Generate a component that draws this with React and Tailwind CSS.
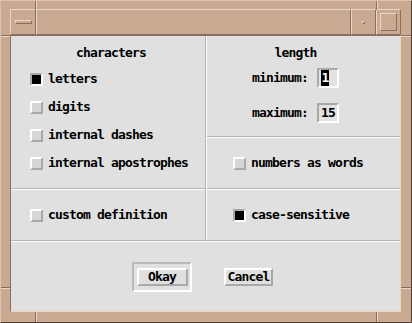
import React from "react";

const mono = "font-['DejaVu_Sans_Mono',monospace] font-bold text-[13px] tracking-[-0.83px] leading-[16px] text-black";
const raised = "border border-t-[#ead6c6] border-l-[#ead6c6] border-b-[#8a6d5a] border-r-[#8a6d5a]";

const Check = ({ on }) => (
  on
    ? <span className="block shrink-0 w-[13px] h-[13px] border-2 border-t-[#a9a9a9] border-l-[#a9a9a9] border-b-white border-r-white bg-black" />
    : <span className="block shrink-0 w-[13px] h-[13px] border-2 border-t-white border-l-white border-b-[#a9a9a9] border-r-[#a9a9a9] bg-[#d6d6d6]" />
);

const CheckRow = ({ on, label, className = "" }) => (
  <div className={`flex items-center gap-[5px] ${className}`}>
    <Check on={on} />
    <span className={mono}>{label}</span>
  </div>
);

const Field = ({ label, children }) => (
  <div className="flex items-center h-[20px]">
    <span className={`${mono} w-[65px]`}>{label}</span>
    <div className="w-[22px] h-[20px] border-2 border-t-[#a9a9a9] border-l-[#a9a9a9] border-b-white border-r-white bg-[#e2e2e2] flex items-center pl-[2px]">
      {children}
    </div>
  </div>
);

export default function App() {
  return (
    <div className="relative w-[412px] h-[323px] bg-[#c9a992] border border-t-[#dcc3b0] border-l-[#dcc3b0] border-b-[#4e3e34] border-r-[#4e3e34] pt-[8px] pl-[9px] pr-[10px] pb-[10px] flex flex-col">
      {/* resize notches */}
      <div className="absolute left-[34px] top-0 w-[2px] h-[9px] border-l border-l-[#8a6d5a] border-r border-r-[#ead6c6]" />
      <div className="absolute left-[375px] top-0 w-[2px] h-[9px] border-l border-l-[#8a6d5a] border-r border-r-[#ead6c6]" />
      <div className="absolute left-[34px] bottom-0 w-[2px] h-[10px] border-l border-l-[#8a6d5a] border-r border-r-[#ead6c6]" />
      <div className="absolute left-[375px] bottom-0 w-[2px] h-[10px] border-l border-l-[#8a6d5a] border-r border-r-[#ead6c6]" />
      <div className="absolute left-0 top-[34px] w-[9px] h-[2px] border-t border-t-[#8a6d5a] border-b border-b-[#ead6c6]" />
      <div className="absolute right-0 top-[34px] w-[10px] h-[2px] border-t border-t-[#8a6d5a] border-b border-b-[#ead6c6]" />
      <div className="absolute left-0 top-[286px] w-[9px] h-[2px] border-t border-t-[#8a6d5a] border-b border-b-[#ead6c6]" />
      <div className="absolute right-0 top-[286px] w-[10px] h-[2px] border-t border-t-[#8a6d5a] border-b border-b-[#ead6c6]" />

      {/* title bar */}
      <div className="flex h-[26px] shrink-0">
        <div className={`w-[26px] ${raised} flex items-center justify-center`}>
          <span className={`block w-[17px] h-[4px] ${raised}`} />
        </div>
        <div className={`flex-1 ${raised}`} />
        <div className={`w-[25px] ${raised} flex items-center justify-center`}>
          <span className={`block w-[3px] h-[3px] ${raised}`} />
        </div>
        <div className={`w-[25px] ${raised} flex items-center justify-center`}>
          <span className={`block w-[17px] h-[18px] ${raised}`} />
        </div>
      </div>

      {/* client */}
      <div className="flex-1 flex flex-col bg-[#e0e0e0] border border-t-[#8a6d5a] border-l-[#8a6d5a] border-b-[#ead6c6] border-r-[#ead6c6]">
        <div className="flex h-[205px] border-b border-b-[#b4b4b4]">
          {/* left column */}
          <div className="w-[195px] flex flex-col border-r border-r-[#b4b4b4]">
            <div className="h-[153px] border-b border-b-[#b4b4b4] pt-[9px] pl-[19px]">
              <div className={`${mono} text-center pr-[19px] pl-[6px]`}>characters</div>
              <div className="mt-[4px] flex flex-col">
                <CheckRow on label="letters" className="h-[28px]" />
                <CheckRow label="digits" className="h-[28px]" />
                <CheckRow label="internal dashes" className="h-[28px]" />
                <CheckRow label="internal apostrophes" className="h-[28px]" />
              </div>
            </div>
            <div className="flex-1 border-t border-t-white flex items-center pl-[19px]">
              <CheckRow label="custom definition" />
            </div>
          </div>
          {/* right column */}
          <div className="flex-1 flex flex-col border-l border-l-white">
            <div className="h-[101px] border-b border-b-[#b4b4b4] pt-[9px] flex flex-col items-center pr-[16px]">
              <div className={mono}>length</div>
              <div className="mt-[7px] flex flex-col gap-[15px]">
                <Field label="minimum:">
                  <span className={`${mono} bg-black text-white leading-[11px] px-[0.5px]`}>1</span>
                </Field>
                <Field label="maximum:">
                  <span className={mono}>15</span>
                </Field>
              </div>
            </div>
            <div className="h-[52px] border-t border-t-white border-b border-b-[#b4b4b4] flex items-center pl-[26px]">
              <CheckRow label="numbers as words" />
            </div>
            <div className="flex-1 border-t border-t-white flex items-center pl-[26px]">
              <CheckRow on label="case-sensitive" />
            </div>
          </div>
        </div>

        {/* buttons */}
        <div className="flex-1 border-t border-t-white flex items-center justify-center gap-[32px] pr-[6px]">
          <div className="w-[60px] h-[30px] border-2 border-t-[#b9b9b9] border-l-[#b9b9b9] border-b-white border-r-white flex items-center justify-center">
            <button className={`w-[51px] h-[18px] border-2 border-t-white border-l-white border-b-[#a9a9a9] border-r-[#a9a9a9] bg-[#e0e0e0] flex items-center justify-center ${mono}`}>
              Okay
            </button>
          </div>
          <button className={`w-[49px] h-[18px] border-2 border-t-white border-l-white border-b-[#a9a9a9] border-r-[#a9a9a9] bg-[#e0e0e0] flex items-center justify-center ${mono}`}>
            Cancel
          </button>
        </div>
      </div>
    </div>
  );
}
